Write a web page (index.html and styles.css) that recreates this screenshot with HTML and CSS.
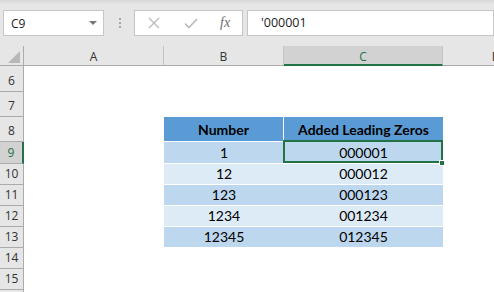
FILE: index.html
```html
<!DOCTYPE html>
<html lang="en">
<head>
    <meta charset="UTF-8">
    <title>Leading Zeros</title>
    <link rel="stylesheet" href="styles.css">
</head>
<body>

    <div class="formula-bar">
        <div class="name-box">
            <span>C9</span>
            <span class="caret"></span>
        </div>
        <div class="grip"><i></i><i></i><i></i></div>
        <div class="fx-buttons">
            <svg class="btn-icon" width="12" height="12" viewBox="0 0 12 12">
                <path d="M1 1 L11 11 M11 1 L1 11" stroke="#b9b9b9" stroke-width="1.3" fill="none"/>
            </svg>
            <svg class="btn-icon" width="14" height="11" viewBox="0 0 14 11">
                <path d="M1 5.5 L5 9.5 L13 1" stroke="#b9b9b9" stroke-width="1.6" fill="none"/>
            </svg>
            <span class="fx">fx</span>
        </div>
        <div class="formula-input">'000001</div>
    </div>

    <div class="sheet">
        <div class="row head">
            <div class="rh corner"><span class="tri"></span></div>
            <div class="ca hc">A</div>
            <div class="cb hc">B</div>
            <div class="cc hc selected">C</div>
            <div class="cd hc">D</div>
        </div>

        <div class="row r6">
            <div class="rh">6</div>
            <div class="ca"></div><div class="cb"></div><div class="cc"></div><div class="cd"></div>
        </div>
        <div class="row r-tall">
            <div class="rh">7</div>
            <div class="ca"></div><div class="cb"></div><div class="cc"></div><div class="cd"></div>
        </div>
        <div class="row r-tall">
            <div class="rh">8</div>
            <div class="ca"></div>
            <div class="cb t-head t-split">Number</div>
            <div class="cc t-head">Added Leading Zeros</div>
            <div class="cd"></div>
        </div>
        <div class="row r9">
            <div class="rh active">9</div>
            <div class="ca"></div>
            <div class="cb t-dark">1</div>
            <div class="cc t-dark active-cell">000001</div>
            <div class="cd"></div>
        </div>
        <div class="row">
            <div class="rh">10</div>
            <div class="ca"></div>
            <div class="cb t-light">12</div>
            <div class="cc t-light">000012</div>
            <div class="cd"></div>
        </div>
        <div class="row">
            <div class="rh">11</div>
            <div class="ca"></div>
            <div class="cb t-dark">123</div>
            <div class="cc t-dark">000123</div>
            <div class="cd"></div>
        </div>
        <div class="row">
            <div class="rh">12</div>
            <div class="ca"></div>
            <div class="cb t-light">1234</div>
            <div class="cc t-light">001234</div>
            <div class="cd"></div>
        </div>
        <div class="row">
            <div class="rh">13</div>
            <div class="ca"></div>
            <div class="cb t-dark">12345</div>
            <div class="cc t-dark">012345</div>
            <div class="cd"></div>
        </div>
        <div class="row">
            <div class="rh">14</div>
            <div class="ca"></div><div class="cb"></div><div class="cc"></div><div class="cd"></div>
        </div>
        <div class="row">
            <div class="rh">15</div>
            <div class="ca"></div><div class="cb"></div><div class="cc"></div><div class="cd"></div>
        </div>
        <div class="row">
            <div class="rh"></div>
            <div class="ca"></div><div class="cb"></div><div class="cc"></div><div class="cd"></div>
        </div>
    </div>

</body>
</html>
```

FILE: styles.css
```css
:root {
    --excel-green: #217346;
    --chrome: #e6e6e6;
    --chrome-line: #ababab;
    --box-line: #c6c6c6;
    --blue-head: #5b9bd5;
    --blue-dark: #bdd7ee;
    --blue-light: #ddebf7;
}

body {
    margin: 0;
    width: 494px;
    height: 292px;
    overflow: hidden;
    background: white;
    font-family: "Open Sans", "Noto Sans", sans-serif;
    font-size: 12px;
    color: #222;
}

/* formula bar */

.formula-bar {
    display: flex;
    align-items: center;
    height: 46px;
    padding-left: 3px;
    box-sizing: border-box;
    background: linear-gradient(#d8d8d8 0, var(--chrome) 5px);
}

.name-box {
    display: flex;
    align-items: center;
    justify-content: space-between;
    width: 101px;
    height: 26px;
    padding: 0 6px 0 7px;
    box-sizing: border-box;
    background: white;
    border: 1px solid var(--box-line);
}

.caret {
    width: 0;
    height: 0;
    border-left: 4px solid transparent;
    border-right: 4px solid transparent;
    border-top: 4px solid #777;
}

.grip {
    display: flex;
    flex-direction: column;
    gap: 2px;
    margin: 0 13px 0 15px;
}

.grip i {
    width: 2px;
    height: 2px;
    background: #a6a6a6;
}

.fx-buttons {
    display: flex;
    align-items: center;
    width: 109px;
    height: 26px;
    padding-left: 13px;
    box-sizing: border-box;
    background: white;
    border: 1px solid var(--box-line);
}

.btn-icon {
    margin-right: 24px;
}

.btn-icon + .btn-icon {
    margin-right: 22px;
}

.fx {
    font-family: "Liberation Serif", serif;
    font-style: italic;
    font-size: 14px;
    color: #6d6d6d;
}

.formula-input {
    flex: 1;
    height: 26px;
    margin-left: 4px;
    padding-left: 13px;
    line-height: 24px;
    box-sizing: border-box;
    background: white;
    border: 1px solid var(--box-line);
    font-size: 12.5px;
}

/* grid */

.row {
    display: flex;
    height: 21px;
}

.row > div {
    display: flex;
    align-items: flex-end;
    justify-content: center;
    box-sizing: border-box;
    padding-bottom: 2px;
    flex-shrink: 0;
}

.head { height: 20px; }
.r6 { height: 26px; }
.r-tall { height: 25px; }
.r9 { height: 22px; }

.rh {
    width: 24px;
    background: var(--chrome);
    border-right: 1px solid var(--chrome-line);
    border-bottom: 1px solid var(--chrome-line);
    color: #333;
}

.ca { width: 140px; }
.cb { width: 120px; }
.cc { width: 159px; }
.cd { width: 107px; }

.row > .hc {
    align-items: center;
    padding: 2px 0 0;
    background: var(--chrome);
    border-bottom: 1px solid var(--chrome-line);
    border-right: 1px solid #c2c2c2;
    color: #333;
}

.corner {
    position: relative;
    border-bottom: 1px solid var(--chrome-line);
}

.tri {
    position: absolute;
    right: 3px;
    bottom: 2px;
    width: 0;
    height: 0;
    border-left: 12px solid transparent;
    border-bottom: 12px solid #b8b8b8;
}

.row > .selected {
    background: #d2d2d2;
    color: var(--excel-green);
    border-bottom: 2px solid var(--excel-green);
}

.row > .rh.active {
    background: #d2d2d2;
    color: var(--excel-green);
    border-right: 2px solid var(--excel-green);
}

/* table */

.t-head,
.t-dark,
.t-light {
    font-family: Lato, "Noto Sans", sans-serif;
    font-size: 14px;
    color: #000;
    border-bottom: 1px solid white;
}

.row > .t-head {
    background: var(--blue-head);
    font-weight: bold;
    padding-bottom: 3px;
}

.t-split {
    border-right: 1px solid white;
}

.t-dark { background: var(--blue-dark); }
.t-light { background: var(--blue-light); }

.active-cell {
    position: relative;
}

.active-cell::before {
    content: "";
    position: absolute;
    left: -1px;
    top: -2px;
    right: 0;
    bottom: 0;
    border: 2px solid var(--excel-green);
}

.active-cell::after {
    content: "";
    position: absolute;
    right: -2px;
    bottom: -3px;
    width: 4px;
    height: 4px;
    background: var(--excel-green);
    border: 1px solid white;
    z-index: 2;
}
```
